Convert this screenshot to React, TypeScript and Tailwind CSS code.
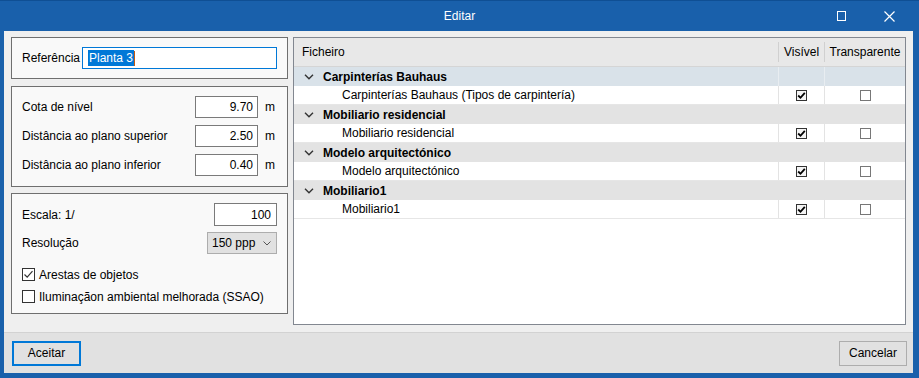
import React from "react";

const groups = [
  { name: "Carpinterías Bauhaus", child: "Carpinterías Bauhaus (Tipos de carpintería)", active: true },
  { name: "Mobiliario residencial", child: "Mobiliario residencial", active: false },
  { name: "Modelo arquitectónico", child: "Modelo arquitectónico", active: false },
  { name: "Mobiliario1", child: "Mobiliario1", active: false },
];

function Chevron() {
  return (
    <svg width="10" height="6" viewBox="0 0 10 6" className="shrink-0">
      <path d="M1 0.8 L5 4.8 L9 0.8" fill="none" stroke="#333" strokeWidth="1.4" />
    </svg>
  );
}

function GridCheck({ checked }: { checked: boolean }) {
  return (
    <span
      className={`flex h-[11px] w-[11px] items-center justify-center border ${
        checked ? "border-[#333] bg-[#f4f4f4]" : "border-[#777] bg-white"
      }`}
    >
      {checked && (
        <svg width="9" height="9" viewBox="0 0 9 9">
          <path d="M1.2 4.5 L3.5 6.8 L7.8 1.8" fill="none" stroke="#000" strokeWidth="1.8" />
        </svg>
      )}
    </span>
  );
}

function FormCheck({ checked, label }: { checked: boolean; label: string }) {
  return (
    <div className="flex h-[13px] items-center gap-[4px]">
      <span className="flex h-[13px] w-[13px] items-center justify-center border border-[#333] bg-white">
        {checked && (
          <svg width="11" height="11" viewBox="0 0 11 11">
            <path d="M1.5 5.5 L4.2 8.2 L9.5 2.2" fill="none" stroke="#333" strokeWidth="1.2" />
          </svg>
        )}
      </span>
      <span>{label}</span>
    </div>
  );
}

function NumInput({ value, width }: { value: string; width: string }) {
  return (
    <div
      className={`flex h-[22px] ${width} items-center justify-end border border-[#7a7a7a] bg-white pr-[4px]`}
    >
      {value}
    </div>
  );
}

export default function App() {
  return (
    <div className="flex h-[378px] w-[919px] flex-col bg-[#1960ab] font-['Liberation_Sans',Arial,sans-serif] text-[12px] text-black">
      <div className="grid h-[31px] grid-cols-[1fr_auto_1fr] items-center border-t border-[#0f4f94] text-white">
        <div />
        <div className="text-[12px]">Editar</div>
        <div className="flex items-center justify-end gap-[38px] pr-[24px]">
          <span className="h-[10px] w-[9px] border border-white" />
          <svg width="11" height="11" viewBox="0 0 11 11">
            <path d="M0.5 0.5 L10.5 10.5 M10.5 0.5 L0.5 10.5" stroke="#fff" strokeWidth="1.2" />
          </svg>
        </div>
      </div>

      <div className="mb-[5px] ml-[4px] mr-[6px] flex flex-1 flex-col bg-[#efefef]">
        <div className="flex flex-1 gap-[5px] border-b border-[#d2d2d2] px-[7px] pb-[7px] pt-[6px]">
          {/* left column */}
          <div className="flex w-[277px] flex-col">
            <div className="flex h-[42px] items-center justify-between border border-[#6f6f6f] bg-[#f9f9f9] px-[10px]">
              <span>Referência</span>
              <div className="flex h-[22px] w-[195px] items-center border border-[#0078d7] bg-white pl-[5px]">
                <span className="bg-[#0078d7] px-[1px] leading-[16px] text-white">Planta 3</span>
                <span className="h-[15px] w-[1px] bg-[#c55a11]" />
              </div>
            </div>

            <div className="mt-[7px] flex h-[101px] flex-col gap-[7px] border border-[#6f6f6f] bg-[#f9f9f9] pl-[10px] pr-[12px] pt-[9px]">
              {[
                ["Cota de nível", "9.70"],
                ["Distância ao plano superior", "2.50"],
                ["Distância ao plano inferior", "0.40"],
              ].map(([label, val]) => (
                <div key={label} className="flex h-[22px] items-center">
                  <span className="flex-1">{label}</span>
                  <NumInput value={val} width="w-[63px]" />
                  <span className="w-[17px] text-right">m</span>
                </div>
              ))}
            </div>

            <div className="mt-[6px] flex h-[121px] flex-col border border-[#6f6f6f] bg-[#f9f9f9] pl-[10px] pr-[10px] pt-[9px]">
              <div className="flex h-[23px] items-center justify-between">
                <span>Escala: 1/</span>
                <div className="flex h-[23px] w-[63px] items-center justify-end border border-[#7a7a7a] bg-white pr-[5px]">
                  100
                </div>
              </div>
              <div className="mt-[6px] flex h-[22px] items-center justify-between">
                <span>Resolução</span>
                <div className="flex h-[22px] w-[70px] items-center justify-between border border-[#adadad] bg-[#e1e1e1] pl-[4px] pr-[5px]">
                  <span>150 ppp</span>
                  <svg width="8" height="5" viewBox="0 0 8 5">
                    <path d="M0.5 0.5 L4 4 L7.5 0.5" fill="none" stroke="#555" strokeWidth="1" />
                  </svg>
                </div>
              </div>
              <div className="mt-[14px] flex flex-col gap-[9px]">
                <FormCheck checked label="Arestas de objetos" />
                <FormCheck checked={false} label="Iluminaçãon ambiental melhorada (SSAO)" />
              </div>
            </div>
          </div>

          {/* right panel */}
          <div className="flex flex-1 flex-col border border-[#828790] bg-white">
            <div className="grid h-[29px] grid-cols-[484px_46px_1fr] items-center border-b border-[#d5d5d5] bg-[#e8e8e8]">
              <span className="pl-[8px]">Ficheiro</span>
              <span className="flex h-[20px] items-center justify-center border-l border-[#d0d0d0]">Visível</span>
              <span className="flex h-[20px] items-center justify-center border-l border-[#d0d0d0]">Transparente</span>
            </div>
            {groups.map((g) => (
              <React.Fragment key={g.name}>
                <div
                  className={`grid h-[19px] grid-cols-[484px_46px_1fr] items-center ${
                    g.active ? "bg-[#d9e2e9]" : "bg-[#e3e3e3]"
                  }`}
                >
                  <div className="flex items-center gap-[9px] pl-[10px] font-bold">
                    <Chevron />
                    <span>{g.name}</span>
                  </div>
                  <span className={`h-full border-l ${g.active ? "border-[#e8edf1]" : "border-[#e3e3e3]"}`} />
                  <span className={`h-full border-l ${g.active ? "border-[#e8edf1]" : "border-[#e3e3e3]"}`} />
                </div>
                <div className="grid h-[19px] grid-cols-[484px_46px_1fr] items-center border-b border-[#e6e6e6]">
                  <span className="pl-[48px]">{g.child}</span>
                  <span className="flex h-full items-center justify-center border-l border-[#e3e3e3]">
                    <GridCheck checked />
                  </span>
                  <span className="flex h-full items-center justify-center border-l border-[#e3e3e3]">
                    <GridCheck checked={false} />
                  </span>
                </div>
              </React.Fragment>
            ))}
          </div>
        </div>

        <div className="flex h-[40px] items-center justify-between bg-[#e1e1e1] pl-[8px] pr-[6px]">
          <button className="h-[25px] w-[69px] border-2 border-[#0078d7] bg-[#e1e1e1]">Aceitar</button>
          <button className="h-[25px] w-[68px] border border-[#adadad] bg-[#e1e1e1]">Cancelar</button>
        </div>
      </div>
    </div>
  );
}
